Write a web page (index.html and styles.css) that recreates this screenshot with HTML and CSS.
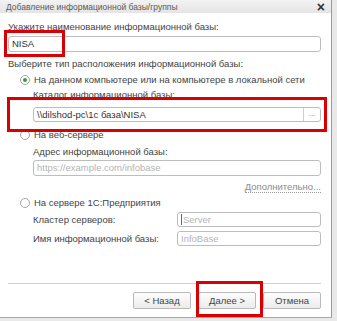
FILE: index.html
```html
<!DOCTYPE html>
<html lang="ru">
<head>
  <meta charset="UTF-8" />
  <title>Добавление информационной базы/группы</title>
  <link rel="stylesheet" href="styles.css">
</head>
<body>

  <div class="dialog">
    <div class="titlebar">
      <span>Добавление информационной базы/группы</span>
      <span class="close">×</span>
    </div>

    <div class="content">
      <div class="label first">Укажите наименование информационной базы:</div>
      <div class="field name-field">NISA</div>

      <div class="label group">Выберите тип расположения информационной базы:</div>

      <div class="radio-row first-radio"><span class="radio checked"></span>На данном компьютере или на компьютере в локальной сети</div>
      <div class="label indent catalog">Каталог информационной базы:</div>
      <div class="field indent path-field">
        <span class="value">\\dilshod-pc\1c база\NISA</span>
        <span class="choose">...</span>
      </div>

      <div class="radio-row web"><span class="radio"></span>На веб-сервере</div>
      <div class="label indent addr">Адрес информационной базы:</div>
      <div class="field indent url-field placeholder">https://example.com/infobase</div>
      <div class="more"><span>Дополнительно...</span></div>

      <div class="radio-row server"><span class="radio"></span>На сервере 1С:Предприятия</div>
      <div class="pair cluster">
        <span class="pair-label">Кластер серверов:</span>
        <div class="field small placeholder"><span class="caret"></span>Server</div>
      </div>
      <div class="pair base">
        <span class="pair-label">Имя информационной базы:</span>
        <div class="field small placeholder">InfoBase</div>
      </div>

      <div class="spacer"></div>
      <div class="separator"></div>
      <div class="buttons">
        <button>&lt; Назад</button>
        <button>Далее &gt;</button>
        <button>Отмена</button>
      </div>
    </div>

    <!-- annotation frames -->
    <div class="mark mark-name"></div>
    <div class="mark mark-path"></div>
    <div class="mark mark-next"></div>
  </div>

</body>
</html>
```

FILE: styles.css
```css
body { margin: 0; background: #e9e9e9; font-family: "Liberation Sans", Arial, sans-serif; font-size: 9.5px; color: #444; }
.dialog { position: relative; width: 332px; height: 318px; background: #fff; border-right: 1px solid #9a9a9a; border-bottom: 1px solid #a8a8a8; box-sizing: border-box; display: flex; flex-direction: column; }
.titlebar { height: 13px; background: linear-gradient(#f3f3f3, #e4e4e4); display: flex; justify-content: space-between; align-items: center; padding: 0 6px 0 6px; font-size: 8.5px; color: #5a5a5a; }
.close { font-size: 14px; font-weight: bold; color: #333; }
.content { flex: 1; display: flex; flex-direction: column; padding: 0 10px 0 8px; }
.label { line-height: 12px; white-space: nowrap; }
.label.first { margin-top: 8px; }
.label.group { margin-top: 6px; }
.indent { margin-left: 25px; }
.field { box-sizing: border-box; height: 16px; border: 1px solid #bdbdbd; border-radius: 3px; padding: 0 3px; line-height: 14px; color: #333; background: #fff; display: flex; align-items: center; }
.name-field { margin-top: 3px; }
.placeholder { color: #b4b4b4; }
.radio-row { display: flex; align-items: center; line-height: 12px; margin-left: 12px; white-space: nowrap; }
.radio { box-sizing: border-box; width: 10px; height: 10px; border: 1px solid #a5a5a5; border-radius: 50%; margin-right: 4px; background: #fff; display: flex; justify-content: center; align-items: center; }
.radio.checked::after { content: ""; width: 4px; height: 4px; border-radius: 50%; background: #3c9a3c; }
.first-radio { margin-top: 4px; }
.catalog { margin-top: 3px; }
.path-field { margin-top: 6px; height: 15px; padding-right: 0; }
.path-field .value { flex: 1; }
.choose { width: 16px; height: 100%; border-left: 1px solid #cfcfcf; text-align: center; font-size: 8px; color: #777; line-height: 11px; }
.web { margin-top: 7px; }
.addr { margin-top: 5px; }
.url-field { margin-top: 2px; }
.more { margin-top: 5px; line-height: 12px; text-align: right; color: #8c8c8c; }
.more span { border-bottom: 1px dotted #9a9a9a; }
.server { margin-top: 4px; }
.pair { display: flex; align-items: center; margin-left: 25px; }
.pair-label { width: 144px; }
.pair .field { flex: 1; height: 15px; }
.cluster { margin-top: 3px; }
.base { margin-top: 4px; }
.caret { width: 1px; height: 11px; background: #666; margin-right: 1px; }
.spacer { flex: 1; }
.separator { height: 1px; background: #cfcfcf; }
.buttons { display: flex; justify-content: flex-end; gap: 7px; margin: 8px 0 8px; }
.buttons button { width: 58px; height: 17px; padding: 0; font-family: inherit; font-size: 9.5px; color: #444; background: linear-gradient(#fdfdfd, #ececec); border: 1px solid #b9b9b9; border-radius: 2px; }
.mark { position: absolute; border: 3px solid #d80000; box-sizing: border-box; }
.mark-name { left: 4px; top: 30px; width: 61px; height: 27px; }
.mark-path { left: 7px; top: 97px; width: 320px; height: 35px; }
.mark-next { left: 196px; top: 281px; width: 67px; height: 36px; }
```
